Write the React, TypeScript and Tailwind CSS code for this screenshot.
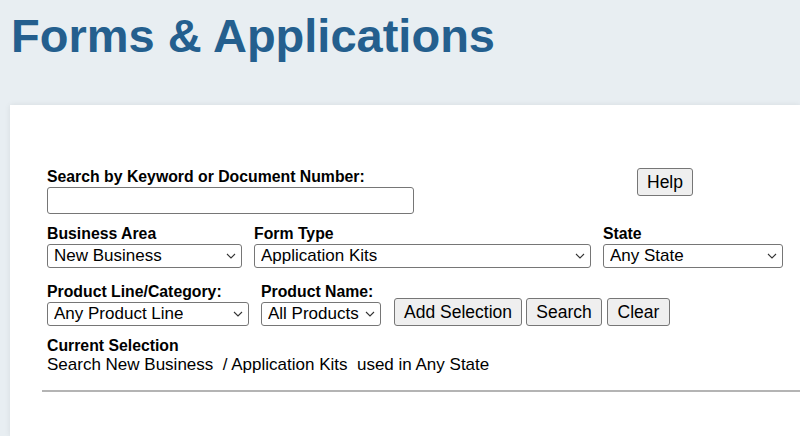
import { ReactNode } from "react";

function Chevron() {
  return (
    <svg width="10" height="6" viewBox="0 0 10 6" className="shrink-0">
      <path d="M1 1l4 4 4-4" fill="none" stroke="#333" strokeWidth="1.1" />
    </svg>
  );
}

function FakeSelect({ value, className }: { value: string; className: string }) {
  return (
    <div
      className={`flex items-center justify-between h-[24px] pl-[6px] pr-[5px] border border-[#767676] rounded-[3px] bg-white text-[17px] leading-[18px] text-black ${className}`}
    >
      <span className="whitespace-nowrap overflow-hidden">{value}</span>
      <Chevron />
    </div>
  );
}

function Btn({ children, className = "" }: { children: ReactNode; className?: string }) {
  return (
    <button
      className={`h-[28px] border border-[#767676] rounded-[3px] bg-[#efefef] text-[17.5px] leading-[18px] text-black flex items-center justify-center ${className}`}
    >
      {children}
    </button>
  );
}

function Label({ children }: { children: ReactNode }) {
  return <div className="text-[15.8px] leading-[16px] font-bold text-black whitespace-nowrap">{children}</div>;
}

export default function App() {
  return (
    <div className="min-h-[436px] h-[436px] overflow-hidden bg-[#e8eef2] font-['Liberation_Sans',Arial,sans-serif] flex flex-col">
      <h1 className="pl-[11px] pt-[13px] text-[47px] leading-[46px] font-bold text-[#245f8e]">
        Forms &amp; Applications
      </h1>

      <div className="mt-[46px] ml-[10px] flex-1 bg-white shadow-[0_0_6px_rgba(0,0,0,0.08)] pl-[37px] pt-[63px]">
        {/* keyword row */}
        <div className="flex items-start">
          <div className="w-[367px] pt-[1px]">
            <Label>Search by Keyword or Document Number:</Label>
            <div className="mt-[2px] h-[27px] border border-[#767676] rounded-[3px] bg-white" />
          </div>
          <Btn className="ml-[223px] w-[56px]">Help</Btn>
        </div>

        {/* business / form type / state */}
        <div className="flex mt-[12px] gap-[12px]">
          <div>
            <Label>Business Area</Label>
            <FakeSelect value="New Business" className="mt-[2px] w-[195px]" />
          </div>
          <div>
            <Label>Form Type</Label>
            <FakeSelect value="Application Kits" className="mt-[2px] w-[337px]" />
          </div>
          <div>
            <Label>State</Label>
            <FakeSelect value="Any State" className="mt-[2px] w-[180px]" />
          </div>
        </div>

        {/* product row */}
        <div className="flex items-end mt-[16px]">
          <div>
            <Label>Product Line/Category:</Label>
            <FakeSelect value="Any Product Line" className="mt-[2px] w-[202px] h-[23px]" />
          </div>
          <div className="ml-[12px]">
            <Label>Product Name:</Label>
            <FakeSelect value="All Products" className="mt-[2px] w-[120px] h-[23px] pr-[3px]" />
          </div>
          <Btn className="ml-[13px] w-[128px]">Add Selection</Btn>
          <Btn className="ml-[4px] w-[76px]">Search</Btn>
          <Btn className="ml-[5px] w-[63px]">Clear</Btn>
        </div>

        {/* current selection */}
        <div className="mt-[12px]">
          <Label>Current Selection</Label>
          <div className="mt-[2px] text-[17px] leading-[18px] text-black whitespace-pre">
            Search New Business  / Application Kits  used in Any State
          </div>
        </div>

        <div className="mt-[16px] -ml-[5px] h-[2px] bg-[#b4b4b4]" />
      </div>
    </div>
  );
}
